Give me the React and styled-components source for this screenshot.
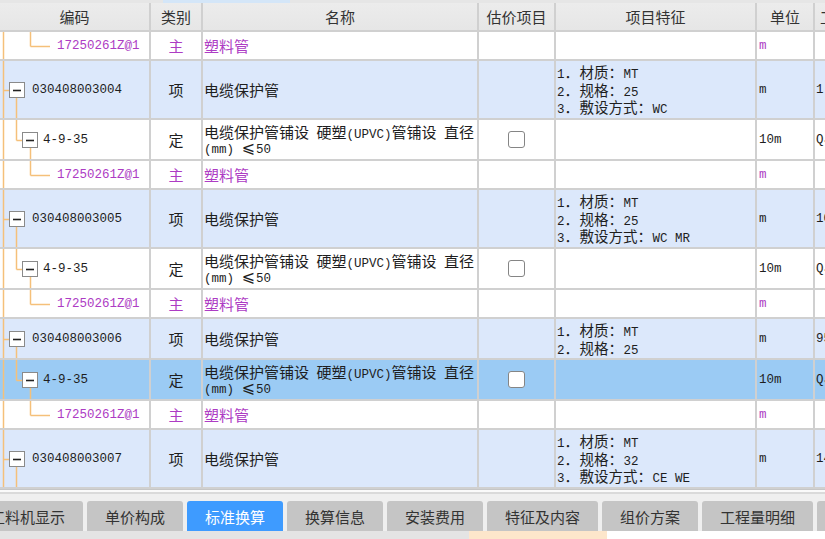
import styled, { createGlobalStyle } from 'styled-components';

const GlobalStyle = createGlobalStyle`
  html, body {
    margin: 0;
    padding: 0;
    background: #efefef;
    overflow: hidden;
  }
  body {
    font-family: "Noto Sans CJK SC", "Noto Sans", sans-serif;
    color: #1e1e1e;
  }
`;

const COLS = '151px 52px 276px 77px 201px 58px 140px';
const GRID = '#d0d0d0';
const TREE = '#f5c07a';
const PURPLE = '#ad3cc4';

const Page = styled.div`
  width: 825px;
  height: 539px;
  overflow: hidden;
  display: flex;
  flex-direction: column;
`;

const TopStrip = styled.div`
  height: 3px;
  background: #e6e6e6;
  display: flex;
`;

const StripThumb = styled.div`
  margin-left: 163px;
  width: 127px;
  background: #d4e6f8;
`;

const Table = styled.div`
  display: flex;
  flex-direction: column;
  background: #fff;
`;

const HeaderRow = styled.div`
  display: grid;
  grid-template-columns: ${COLS};
  height: 29px;
  box-sizing: border-box;
  border-bottom: 2px solid ${GRID};
  background: linear-gradient(#ececec, #e6e6e6);
`;

const HeadCell = styled.div`
  display: flex;
  align-items: center;
  justify-content: ${(p) => (p.$left ? 'flex-start' : 'center')};
  padding-left: ${(p) => (p.$left ? '5px' : '0')};
  border-right: 2px solid ${GRID};
  font-size: 15px;
  color: #333;
  white-space: nowrap;
  overflow: hidden;
`;

const rowBg = {
  item: '#dce8fb',
  quota: '#ffffff',
  sub: '#ffffff',
  selected: '#9bcbf4',
};

const Row = styled.div`
  display: grid;
  grid-template-columns: ${COLS};
  height: ${(p) => p.$h}px;
  box-sizing: border-box;
  border-bottom: 2px solid ${GRID};
  background: ${(p) => rowBg[p.$kind]};
`;

const Cell = styled.div`
  display: flex;
  align-items: center;
  justify-content: ${(p) => (p.$center ? 'center' : 'flex-start')};
  padding-left: ${(p) => p.$pad || 0}px;
  border-right: 2px solid ${GRID};
  overflow: hidden;
  white-space: nowrap;
  font-size: 15px;
  color: ${(p) => (p.$purple ? PURPLE : '#1e1e1e')};
`;

const CodeCell = styled.div`
  display: flex;
  align-items: stretch;
  border-right: 2px solid ${GRID};
  overflow: hidden;
`;

const CodeText = styled.span`
  align-self: center;
  font-family: "Liberation Mono", monospace;
  font-size: 12.5px;
  color: ${(p) => (p.$purple ? PURPLE : '#1e1e1e')};
  white-space: nowrap;
`;

const Lines = styled.div`
  display: flex;
  flex-direction: column;
  font-size: ${(p) => p.$fs}px;
`;

const Line = styled.div`
  height: ${(p) => p.$lh}px;
  line-height: ${(p) => p.$lh}px;
  display: flex;
  align-items: baseline;
  white-space: pre;
`;

const M = styled.span`
  font-family: "Liberation Mono", monospace;
  font-size: 12.5px;
  line-height: 1;
  white-space: pre;
`;

const Punct = styled.span`
  display: inline-block;
  width: 15px;
`;

const Le = styled.span`
  font-family: "DejaVu Sans", sans-serif;
  font-size: 16px;
  line-height: 1;
  padding: 0 1px 0 0;
`;

const Unit = styled.span`
  font-family: "Liberation Mono", monospace;
  font-size: 12.5px;
  color: ${(p) => (p.$purple ? PURPLE : '#1e1e1e')};
`;

const Check = styled.span`
  width: 15px;
  height: 15px;
  border: 1px solid #858585;
  border-radius: 3px;
  background: #fff;
`;

const Gap = styled.div`
  height: 12px;
  box-sizing: border-box;
  border-top: 1px solid #c6c6c6;
  background: linear-gradient(#fafafa 0 2px, #dadada 2px 4px, #efefef 4px);
`;

const TabBar = styled.div`
  display: flex;
  gap: 4px;
  margin-left: -28px;
  height: 30px;
`;

const Tab = styled.div`
  display: flex;
  align-items: center;
  padding: 0 18px;
  border-radius: 3px 3px 0 0;
  background: ${(p) => (p.$active ? '#3e9bff' : '#c5c5c5')};
  color: ${(p) => (p.$active ? '#fff' : '#333')};
  font-size: 15px;
  white-space: nowrap;
`;

const BottomStrip = styled.div`
  flex: 1;
  display: flex;
`;

const Segment = styled.div`
  width: ${(p) => (p.$w ? `${p.$w}px` : 'auto')};
  flex: ${(p) => (p.$w ? 'none' : 1)};
  background: ${(p) => p.$bg};
`;

const Tree = ({ kind, h }) => {
  const H = h - 2;
  const mid = Math.round(H / 2);
  const w = kind === 'item' ? 32 : kind === 'sub' ? 57 : 43;
  const line = { stroke: TREE, strokeWidth: 1.5 };
  const box = (x) => (
    <g>
      <rect x={x + 0.5} y={mid - 7.5} width="15" height="15" fill="#fff" stroke="#8a8a8a" />
      <line x1={x + 4} y1={mid + 0.5} x2={x + 12} y2={mid + 0.5} stroke="#222" strokeWidth="1.6" />
    </g>
  );
  return (
    <svg width={w} height={H} style={{ flex: 'none' }}>
      <line x1="3.5" y1="0" x2="3.5" y2={H} {...line} />
      {kind === 'item' && (
        <>
          <line x1="3.5" y1={mid + 0.5} x2="9" y2={mid + 0.5} {...line} />
          <line x1="16.5" y1={mid + 8} x2="16.5" y2={H} {...line} />
          {box(9)}
        </>
      )}
      {(kind === 'quota' || kind === 'selected') && (
        <>
          <line x1="16.5" y1="0" x2="16.5" y2={mid + 0.5} {...line} />
          <line x1="16.5" y1={mid + 0.5} x2="22" y2={mid + 0.5} {...line} />
          <line x1="30.5" y1={mid + 8} x2="30.5" y2={H} {...line} />
          {box(22)}
        </>
      )}
      {kind === 'sub' && (
        <>
          <line x1="30.5" y1="0" x2="30.5" y2={mid + 0.5} {...line} />
          <line x1="30.5" y1={mid + 0.5} x2="50" y2={mid + 0.5} {...line} />
        </>
      )}
    </svg>
  );
};

const feat = (n, label, value) => (
  <Line key={n} $lh={17.5}>
    <M>{n}</M>
    <Punct>．</Punct>
    {label}
    <Punct>：</Punct>
    <M>{value}</M>
  </Line>
);

const quotaName = (
  <Lines $fs={15}>
    <Line $lh={17}>
      电缆保护管铺设<M> </M>硬塑<M>(UPVC)</M>管铺设<M> </M>直径
    </Line>
    <Line $lh={17}>
      <M>(mm) </M>
      <Le>⩽</Le>
      <M>50</M>
    </Line>
  </Lines>
);

const item = (code, specs, h, tail) => ({ kind: 'item', code, specs, h, tail });
const quota = (sel, tail) => ({ kind: sel ? 'selected' : 'quota', h: 41, tail });
const sub = { kind: 'sub', h: 29 };

const rows = [
  sub,
  item('030408003004', [['材质', 'MT'], ['规格', '25'], ['敷设方式', 'WC']], 59, '1'),
  quota(false, 'QJ'),
  sub,
  item('030408003005', [['材质', 'MT'], ['规格', '25'], ['敷设方式', 'WC MR']], 59, '10'),
  quota(false, 'QJ'),
  sub,
  item('030408003006', [['材质', 'MT'], ['规格', '25']], 41, '95'),
  quota(true, 'QJ'),
  sub,
  item('030408003007', [['材质', 'MT'], ['规格', '32'], ['敷设方式', 'CE WE']], 59, '14'),
];

const DataRow = ({ r }) => {
  const isSub = r.kind === 'sub';
  const isItem = r.kind === 'item';
  const isQuota = r.kind === 'quota' || r.kind === 'selected';
  return (
    <Row $h={r.h} $kind={r.kind}>
      <CodeCell>
        <Tree kind={r.kind} h={r.h} />
        <CodeText $purple={isSub}>
          {isSub ? '17250261Z@1' : isItem ? r.code : '4-9-35'}
        </CodeText>
      </CodeCell>
      <Cell $center $purple={isSub}>
        {isSub ? '主' : isItem ? '项' : '定'}
      </Cell>
      <Cell $pad={1} $purple={isSub}>
        {isSub ? '塑料管' : isItem ? '电缆保护管' : quotaName}
      </Cell>
      <Cell $center>{isQuota && <Check />}</Cell>
      <Cell $pad={1}>
        {isItem && (
          <Lines $fs={14.5}>
            {r.specs.map(([label, value], i) => feat(i + 1, label, value))}
          </Lines>
        )}
      </Cell>
      <Cell $pad={2}>
        <Unit $purple={isSub}>{isQuota ? '10m' : 'm'}</Unit>
      </Cell>
      <Cell $pad={1}>{r.tail && <Unit>{r.tail}</Unit>}</Cell>
    </Row>
  );
};

const tabs = ['工料机显示', '单价构成', '标准换算', '换算信息', '安装费用', '特征及内容', '组价方案', '工程量明细', '说明信息'];

export default function App() {
  return (
    <Page>
      <GlobalStyle />
      <TopStrip>
        <StripThumb />
      </TopStrip>
      <Table>
        <HeaderRow>
          <HeadCell>编码</HeadCell>
          <HeadCell>类别</HeadCell>
          <HeadCell>名称</HeadCell>
          <HeadCell>估价项目</HeadCell>
          <HeadCell>项目特征</HeadCell>
          <HeadCell>单位</HeadCell>
          <HeadCell $left>工程量表达式</HeadCell>
        </HeaderRow>
        {rows.map((r, i) => (
          <DataRow key={i} r={r} />
        ))}
      </Table>
      <Gap />
      <TabBar>
        {tabs.map((t) => (
          <Tab key={t} $active={t === '标准换算'}>
            {t}
          </Tab>
        ))}
      </TabBar>
      <BottomStrip>
        <Segment $w={469} $bg="#e4e4e4" />
        <Segment $w={138} $bg="#fde6cb" />
        <Segment $bg="#ffffff" />
      </BottomStrip>
    </Page>
  );
}
